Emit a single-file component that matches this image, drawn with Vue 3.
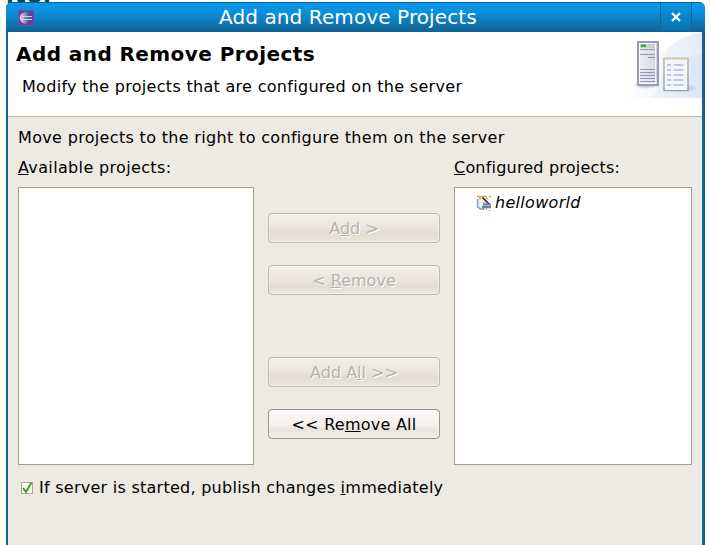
<script setup>
const vents = [38.5, 41.5, 44.5, 47.5, 50.5]
const rows = [33, 38, 43, 48, 53]
</script>

<template>
  <div class="desktop">
    <div class="behind">itor</div>
    <section class="window">
      <header class="titlebar">
        <svg class="app-icon" width="16" height="16" viewBox="0 0 16 16">
          <defs>
            <linearGradient id="orb" x1="0" x2="1">
              <stop offset="0" stop-color="#f5d6df" />
              <stop offset=".4" stop-color="#a99bcf" />
              <stop offset="1" stop-color="#2b2477" />
            </linearGradient>
          </defs>
          <rect width="16" height="16" fill="#5848a4" />
          <rect x=".5" y=".5" width="15" height="15" fill="none" stroke="#6e50ac" />
          <circle cx="7.500" cy="8" r="5.800" fill="url(#orb)" />
          <path d="M3 6.500h11M3 9.500h11" stroke="#c5d5ee" stroke-width="1" />
          <path d="M6 8h8" stroke="#6a66ad" stroke-width="1.200" />
        </svg>
        <h1 class="title"><span>Add and Remove Projects</span></h1>
        <button class="close" aria-label="Close">
          <svg width="10" height="10" viewBox="0 0 10 10"><path d="M1 1l8 8M9 1l-8 8" stroke="#fff" stroke-width="2.200" /></svg>
        </button>
      </header>

      <div class="banner">
        <div class="banner-text">
          <h2>Add and Remove Projects</h2>
          <p>Modify the projects that are configured on the server</p>
        </div>
        <svg class="art" width="75" height="66" viewBox="0 0 75 66">
          <defs>
            <linearGradient id="sweep" x1="0" x2="1">
              <stop offset="0" stop-color="#fff" />
              <stop offset="1" stop-color="#dbe3f5" />
            </linearGradient>
            <linearGradient id="sweep2" x1="0" x2="1">
              <stop offset="0" stop-color="#edf1fa" />
              <stop offset="1" stop-color="#d9e2f5" />
            </linearGradient>
            <linearGradient id="tower" x1="0" x2="1">
              <stop offset="0" stop-color="#f0f0f6" />
              <stop offset="1" stop-color="#d3d4e2" />
            </linearGradient>
            <radialGradient id="shade">
              <stop offset="0" stop-color="#8c87a5" stop-opacity=".8" />
              <stop offset="1" stop-color="#a9a5bd" stop-opacity="0" />
            </radialGradient>
          </defs>
          <path d="M75 0C52 4 34 17 29 36C20 48 9 58 0 66H75Z" fill="url(#sweep)" opacity=".75" />
          <path d="M75 22C52 24 34 40 26 66H75Z" fill="url(#sweep2)" opacity=".65" />
          <ellipse cx="19" cy="53" rx="14" ry="4" fill="url(#shade)" />
          <ellipse cx="54" cy="56" rx="17" ry="5" fill="url(#shade)" />
          <rect x="11" y="10" width="20" height="43" fill="url(#tower)" stroke="#9a9aba" stroke-width="2" />
          <rect x="12.500" y="11.500" width="16" height="40" fill="none" stroke="#f7f7fc" />
          <rect x="13" y="12" width="15" height="4" fill="#c2d5cc" />
          <rect x="14" y="12.500" width="5" height="2.500" fill="#43a642" />
          <path d="M13 17.500h15M13 22.500h15" stroke="#9292b5" />
          <path d="M21 25.500h7" stroke="#8888ad" />
          <path v-for="y in vents" :key="y" :d="`M13 ${y - 1}h15`" stroke="#9494b8" />
          <rect x="37" y="26.500" width="24" height="32" fill="#f2f5fb" stroke="#8fa9a6" stroke-width="1.400" />
          <path d="M37 42V26.500h24v16" fill="none" stroke="#d8c4a5" stroke-width="1.400" />
          <path d="M38.500 28v29h21.500" fill="none" stroke="#fff" />
          <g v-for="y in rows" :key="y" fill="none">
            <path :d="`M40 ${y}h4`" stroke="#a9b6d5" stroke-width="1.600" />
            <path :d="`M46.500 ${y}h10`" stroke="#b0bad9" stroke-width="1.600" />
          </g>
        </svg>
      </div>

      <main class="content">
        <p class="intro">Move projects to the right to configure them on the server</p>
        <div class="picker">
          <div class="column left">
            <label><u>A</u>vailable projects:</label>
            <div class="list"></div>
          </div>
          <div class="actions">
            <button class="btn" disabled><span>A<u>d</u>d &gt;</span></button>
            <button class="btn" disabled><span>&lt; <u>R</u>emove</span></button>
            <button class="btn spaced" disabled><span>Add A<u>l</u>l &gt;&gt;</span></button>
            <button class="btn wide"><span>&lt;&lt; Re<u>m</u>ove All</span></button>
          </div>
          <div class="column right">
            <label><u>C</u>onfigured projects:</label>
            <div class="list">
              <div class="item">
                <svg width="16" height="16" viewBox="0 0 16 16">
                  <path d="M1 4L5 3H10L13 10V14H4L1 12Z" fill="#d9eaf9" />
                  <path d="M1.500 4v8l3 2h4" fill="none" stroke="#7799cb" stroke-width="1.300" />
                  <path d="M4 5h4v6H4z" fill="#fff" opacity=".7" />
                  <path d="M1 1.500h10M3 3.500h2M10 3.500h2M13 1.500h2" stroke="#d5a126" stroke-width="1.600" />
                  <path d="M6.500 2.500L14 10" stroke="#17213d" stroke-width="1.600" />
                  <path d="M7 9.500h8M6 12h9" stroke="#4d87c5" stroke-width="1.800" />
                  <path d="M7.500 7v9M10.500 7v9M13.500 9v7" stroke="#c48e45" stroke-width="1.300" stroke-dasharray="1.500 1.500" />
                </svg>
                <em>helloworld</em>
              </div>
            </div>
          </div>
        </div>
        <div class="check">
          <svg width="12" height="12" viewBox="0 0 12 12">
            <rect x=".5" y=".5" width="11" height="11" fill="#fff" stroke="#b3a595" />
            <path d="M2 6l3 4L10.500 .5" fill="none" stroke="#2cab0c" stroke-width="1.900" />
          </svg>
          <span>If server is started, publish changes <u>i</u>mmediately</span>
        </div>
      </main>
    </section>
  </div>
</template>

<style>
body { margin: 0; background: #fff; overflow: hidden; }
</style>

<style scoped>
* { box-sizing: border-box; }
.desktop { position: relative; width: 710px; height: 545px; padding: 2px 5px 0 6px; overflow: hidden; background: #fff; font-family: "DejaVu Sans", sans-serif; font-size: 16px; line-height: 20px; letter-spacing: .3px; font-variant-ligatures: none; color: #000; }
.behind { position: absolute; left: 6px; top: -18px; font-size: 23px; line-height: 26px; letter-spacing: .8px; font-weight: bold; color: #0b4562; }
h1, h2, p { margin: 0; font-weight: normal; white-space: nowrap; }
button { font: inherit; padding: 0; }
u { text-decoration: underline 1px; text-underline-offset: 1px; text-decoration-skip-ink: none; }
.window { position: relative; display: flex; flex-direction: column; width: 699px; height: 543px; background: #136294; border-radius: 6px 6px 0 0; overflow: hidden; }
.titlebar { display: flex; flex: none; height: 30px; background: linear-gradient(#0899ed, #0a91dd 30%, #116294); border-top: 1px solid #0a6396; }
.app-icon { margin: 7px 0 0 12px; flex: none; }
.title { flex: 1; padding-left: 185px; font-size: 20px; letter-spacing: .1px; line-height: 28px; color: #fff; }
.close { display: flex; align-items: center; justify-content: center; width: 32px; height: 28px; margin-right: 13px; border: solid #0b669b; border-width: 0 1px; background: linear-gradient(#0c96e3, #0871b0); }
.banner { display: flex; flex: none; justify-content: space-between; height: 85px; margin: 0 3px 0 2px; background: #fff; border-bottom: 1px solid #bfb6aa; }
.banner-text { padding: 11px 0 0 8px; }
h2 { font-size: 20px; letter-spacing: .43px; font-weight: bold; line-height: 23px; }
.banner-text p { padding: 11px 0 0 6px; }
.art { width: 75px; flex: none; }
.content { flex: 1; margin: 0 3px 0 2px; padding: 11px 10px 0; background: #edeae3; }
.intro { letter-spacing: .33px; }
.picker { display: flex; padding-top: 10px; }
.column { display: flex; flex-direction: column; gap: 9px; }
.left { width: 236px; }
.left label { letter-spacing: .35px; }
.right { width: 238px; }
.right label { letter-spacing: .2px; }
.list { height: 278px; background: #fff; border: 1px solid #a89d8d; }
.actions { display: flex; flex-direction: column; gap: 22px; width: 172px; margin: 55px 14px 0; }
.btn { display: flex; align-items: center; justify-content: center; height: 30px; padding-top: 2px; border: 1px solid #9b9087; border-radius: 4px; background: linear-gradient(#fcfbfa, #f2efeb 55%, #e9e3dc 70%, #f0ede7); color: #000; box-shadow: inset 0 0 0 1px #ffffff55; }
.btn:disabled { border-color: #c5b8aa; background: linear-gradient(#f2f0eb, #e9e4de 50%, #e3dbd2 72%, #eae6de); color: #b4b2af; text-shadow: 1px 1px #fff; }
.wide { letter-spacing: .25px; }
.spaced { margin-top: 40px; }
.item { display: flex; padding: 5px 0 0 21px; gap: 3px; align-items: center; }
.check { display: flex; align-items: center; gap: 6px; padding: 13px 0 0 3px; letter-spacing: .26px; }
</style>
